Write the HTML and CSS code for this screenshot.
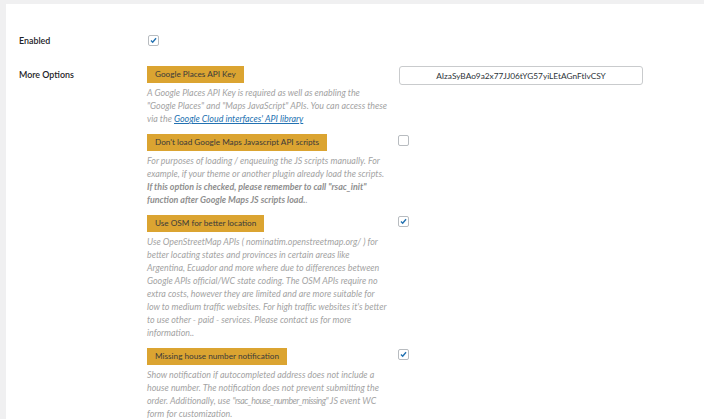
FILE: index.html
```html
<!DOCTYPE html>
<html lang="en">
<head>
    <meta charset="UTF-8">
    <meta name="viewport" content="width=device-width, initial-scale=1.0">
    <title>Address Autocomplete Settings</title>
    <link rel="stylesheet" href="styles.css">
</head>
<body>
    <div class="wrap">
        <div class="panel">
            <div class="row">
                <div class="label">Enabled</div>
                <div class="field">
                    <span class="check on"><svg viewBox="0 0 11 11"><path d="M2.4 5.6 L4.5 7.6 L8.6 2.8"/></svg></span>
                </div>
            </div>

            <div class="row">
                <div class="label">More Options</div>
                <div class="options">
                    <div class="option">
                        <div class="option-main">
                            <div class="badge">Google Places API Key</div>
                            <p class="desc">A Google Places API Key is required as well as enabling the "Google Places" and "Maps JavaScript" APIs. You can access these via the <a href="#">Google Cloud interfaces' API library</a></p>
                        </div>
                        <input class="key" type="text" value="AIzaSyBAo9a2x77JJ06tYG57yiLEtAGnFtlvCSY">
                    </div>

                    <div class="option">
                        <div class="option-main">
                            <div class="badge">Don't load Google Maps Javascript API scripts</div>
                            <p class="desc">For purposes of loading / enqueuing the JS scripts manually. For example, if your theme or another plugin already load the scripts. <b>If this option is checked, please remember to call "rsac_init" function after Google Maps JS scripts load.</b>.</p>
                        </div>
                        <span class="check"></span>
                    </div>

                    <div class="option">
                        <div class="option-main">
                            <div class="badge">Use OSM for better location</div>
                            <p class="desc">Use OpenStreetMap APIs ( nominatim.openstreetmap.org/ ) for better locating states and provinces in certain areas like Argentina, Ecuador and more where due to differences between Google APIs official/WC state coding. The OSM APIs require no extra costs, however they are limited and are more suitable for low to medium traffic websites. For high traffic websites it's better to use other - paid - services. Please contact us for more information..</p>
                        </div>
                        <span class="check on"><svg viewBox="0 0 11 11"><path d="M2.4 5.6 L4.5 7.6 L8.6 2.8"/></svg></span>
                    </div>

                    <div class="option">
                        <div class="option-main">
                            <div class="badge">Missing house number notification</div>
                            <p class="desc">Show notification if autocompleted address does not include a house number. The notification does not prevent submitting the order. Additionally, use <span class="code">"rsac_house_number_missing"</span> JS event WC form for customization.</p>
                        </div>
                        <span class="check on"><svg viewBox="0 0 11 11"><path d="M2.4 5.6 L4.5 7.6 L8.6 2.8"/></svg></span>
                    </div>
                </div>
            </div>
        </div>
    </div>
</body>
</html>
```

FILE: styles.css
```css
*{
    box-sizing: border-box;
}
body{
    margin: 0;
    background: #f0f0f1;
    font-family: Lato, "Open Sans", sans-serif;
    font-size: 8.9px;
    color: #1d2327;
}
.wrap{
    padding: 4px 0 0 6px;
}
.panel{
    background: #fff;
    min-height: 415px;
    padding: 28px 0 0 13px;
}
.row{
    display: grid;
    grid-template-columns: 128px 1fr;
    align-items: start;
    margin-bottom: 17px;
}
.label{
    font-weight: 600;
    line-height: 17px;
}
.field{
    display: flex;
    height: 17px;
    align-items: center;
}
.options{
    display: flex;
    flex-direction: column;
    gap: 9px;
}
.option{
    display: flex;
    align-items: flex-start;
    gap: 9px;
}
.option-main{
    width: 242px;
    flex: none;
}
.badge{
    display: inline-block;
    background: #dba431;
    color: #3a3a3a;
    font-size: 8.2px;
    line-height: 17px;
    padding: 0 8px;
}
.desc{
    margin: 3px 0 0;
    color: #a3a3a3;
    font-style: italic;
    line-height: 13px;
}
.desc b{
    color: #8f8f8f;
}
.desc a{
    color: #2271b1;
}
.desc .code{
    letter-spacing: -0.55px;
}
.key{
    width: 244px;
    height: 19px;
    margin: 0 0 0 1px;
    border: 1px solid #c9cbcd;
    border-radius: 3px;
    font: 8.3px Lato, "Open Sans", sans-serif;
    color: #2c3338;
    text-align: center;
}
.check{
    display: inline-block;
    width: 11px;
    height: 11px;
    margin-top: 1px;
    border: 1px solid #b8bcc0;
    border-radius: 2px;
    background: #fff;
}
.check svg{
    display: block;
    width: 9px;
    height: 9px;
}
.check path{
    fill: none;
    stroke: #2271b1;
    stroke-width: 1.7;
}
.field .check{
    margin: 0 0 0 1px;
}
```
